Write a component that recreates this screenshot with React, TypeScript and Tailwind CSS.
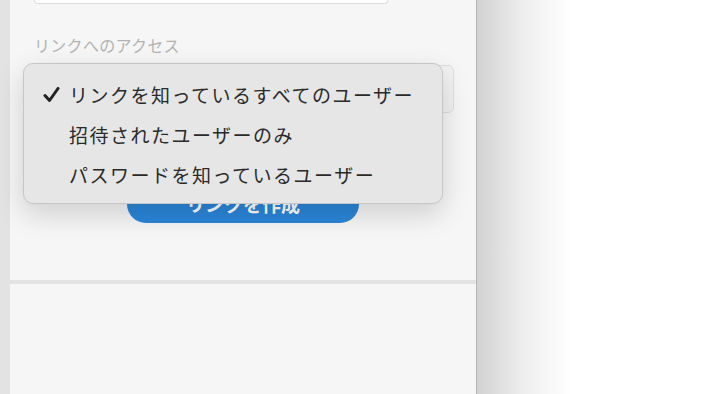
import React from "react";

const font = { fontFamily: '"Noto Sans CJK JP", "Noto Sans", sans-serif' };

export default function App() {
  const items = [
    { label: "リンクを知っているすべてのユーザー", checked: true },
    { label: "招待されたユーザーのみ", checked: false },
    { label: "パスワードを知っているユーザー", checked: false },
  ];
  return (
    <div className="relative flex w-[704px] h-[394px] overflow-hidden bg-white" style={font}>
      <div className="w-[10px] h-full bg-[#e3e3e3]" />
      <div className="relative w-[467px] h-full bg-[#f6f6f6] border-r border-[#b4b4b4] flex flex-col">
        <div className="ml-[24px] w-[354px] h-[4px] bg-white border border-t-0 border-[#dcdcdc] rounded-b-[6px]" />
        <div className="ml-[24px] mt-[30px] text-[16px] leading-[22px] tracking-[0.3px] text-[#b3b3b3]">リンクへのアクセス</div>
        <div className="ml-[24px] mt-[9px] w-[420px] h-[48px] rounded-[6px] border border-[#dedede] bg-[#f2f2f2]" />
        <div className="ml-[117px] mt-[72px] w-[232px] h-[38px] rounded-full bg-[#2b86d9] flex items-center justify-center text-white text-[19px] font-bold">
          リンクを作成
        </div>
        <div className="mt-[57px] h-[4px] bg-[#e3e3e3]" />
        <div className="flex-1" />

        <div className="absolute left-[13px] top-[63px] w-[420px] h-[141px] rounded-[10px] border border-[#c6c6c6] bg-[#e6e6e6] shadow-[0_10px_28px_rgba(0,0,0,0.16)] pt-[11px]">
          {items.map((it) => (
            <div key={it.label} className="relative h-[40px] flex items-center pl-[45px] text-[19px] text-[#2a2a2a] tracking-[1.5px]">
              {it.checked && (
                <svg className="absolute left-[19px] top-[12px]" width="17" height="16" viewBox="0 0 17 16">
                  <path d="M2 8.5 L6.5 13.5 L15 1.5" fill="none" stroke="#222" strokeWidth="3" strokeLinecap="round" strokeLinejoin="round" />
                </svg>
              )}
              {it.label}
            </div>
          ))}
        </div>
      </div>
      <div className="w-[95px] h-full bg-gradient-to-r from-[#d2d2d2] via-[#efefef] to-white" />
      <div className="flex-1 bg-white" />
    </div>
  );
}
